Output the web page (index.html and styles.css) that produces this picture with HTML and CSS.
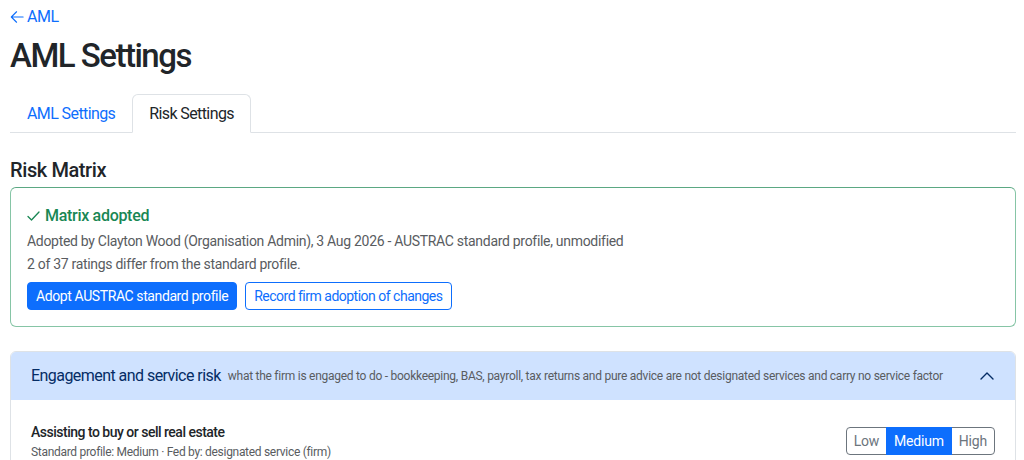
FILE: index.html
```html
<!DOCTYPE html>
<html lang="en">
<head>
    <meta charset="UTF-8">
    <meta name="viewport" content="width=device-width, initial-scale=1.0">
    <title>AML Settings</title>
    <link rel="stylesheet" href="styles.css">
</head>
<body>

<div class="page">
    <a class="back-link" href="#"><svg class="back-arrow" width="14" height="14" viewBox="0 0 16 16"><path d="M15 8H1.5M7.5 2 1.5 8l6 6" fill="none" stroke="currentColor" stroke-width="1.3" stroke-linecap="round" stroke-linejoin="round"/></svg>AML</a>
    <h1 class="page-title">AML Settings</h1>

    <ul class="tabs">
        <li><a class="tab" href="#">AML Settings</a></li>
        <li><a class="tab active" href="#">Risk Settings</a></li>
    </ul>

    <h5 class="section-title">Risk Matrix</h5>

    <!-- adoption status -->
    <div class="status-card">
        <div class="status-title"><svg class="check" width="13" height="12" viewBox="0 0 13 12"><path d="M1 6.5 4.5 10 12 2" fill="none" stroke="currentColor" stroke-width="1.3" stroke-linecap="round" stroke-linejoin="round"/></svg>Matrix adopted</div>
        <p class="status-text">Adopted by Clayton Wood (Organisation Admin), 3 Aug 2026 - AUSTRAC standard profile, unmodified</p>
        <p class="status-text">2 of 37 ratings differ from the standard profile.</p>
        <div class="status-actions">
            <button type="button" class="btn btn-primary">Adopt AUSTRAC standard profile</button>
            <button type="button" class="btn btn-outline">Record firm adoption of changes</button>
        </div>
    </div>

    <!-- risk groups -->
    <div class="accordion">
        <div class="accordion-header">
            <span class="accordion-title">Engagement and service risk</span>
            <span class="accordion-hint">what the firm is engaged to do - bookkeeping, BAS, payroll, tax returns and pure advice are not designated services and carry no service factor</span>
            <svg class="chevron" width="16" height="16" viewBox="0 0 16 16"><path d="M2 11 8 5l6 6" fill="none" stroke="#052c65" stroke-width="1.4" stroke-linecap="round" stroke-linejoin="round"/></svg>
        </div>
        <div class="accordion-body">
            <div class="risk-row">
                <div>
                    <div class="risk-name">Assisting to buy or sell real estate</div>
                    <div class="risk-meta">Standard profile: Medium &middot; Fed by: designated service (firm)</div>
                </div>
                <div class="rating-group">
                    <button type="button" class="rating">Low</button>
                    <button type="button" class="rating active">Medium</button>
                    <button type="button" class="rating">High</button>
                </div>
            </div>
        </div>
    </div>
</div>

</body>
</html>
```

FILE: styles.css
```css
body {
    font-family: Roboto, "Noto Sans", sans-serif;
    color: #212529;
    background-color: #fff;
    margin: 0;
    padding: 0;
}

.page {
    padding: 5px 8px 0 10px;
}

.back-link {
    display: inline-flex;
    align-items: center;
    gap: 3px;
    font-size: 16px;
    line-height: 24px;
    letter-spacing: -0.4px;
    color: #0d6efd;
    text-decoration: none;
}

.page-title {
    font-size: 33px;
    font-weight: 500;
    line-height: 1.2;
    letter-spacing: -1.5px;
    margin: 7px 0 18px;
}

.tabs {
    display: flex;
    list-style: none;
    margin: 0;
    padding: 0;
    border-bottom: 1px solid #dee2e6;
}

.tab {
    display: block;
    padding: 7px 16px 6px;
    margin-bottom: -1px;
    font-size: 16px;
    line-height: 24px;
    letter-spacing: -0.6px;
    color: #0d6efd;
    text-decoration: none;
    border: 1px solid transparent;
    border-radius: 6px 6px 0 0;
}

.tab.active {
    color: #212529;
    background: #fff;
    border-color: #dee2e6 #dee2e6 #fff;
}

.section-title {
    font-size: 20px;
    font-weight: 500;
    line-height: 24px;
    letter-spacing: -0.4px;
    margin: 25px 0 5px;
}

.status-card {
    border: 1px solid #86c5a6;
    border-top-color: #5ba883;
    border-radius: 6px;
    padding: 16px;
    margin-bottom: 24px;
}

.status-title {
    display: flex;
    align-items: center;
    gap: 5px;
    color: #198754;
    font-weight: 500;
    font-size: 16px;
    line-height: 24px;
    letter-spacing: -0.3px;
    margin-bottom: 3px;
}

.status-text {
    font-size: 14px;
    line-height: 21px;
    letter-spacing: -0.3px;
    color: #595c5f;
    margin: 0 0 2px;
}

.status-actions {
    display: flex;
    gap: 8px;
    margin-top: 7px;
}

.btn {
    font-family: inherit;
    font-size: 14px;
    line-height: 20px;
    letter-spacing: -0.4px;
    padding: 3px 8px;
    border-radius: 4px;
    border: 1px solid #0d6efd;
    cursor: pointer;
}

.btn-primary {
    background-color: #0d6efd;
    color: #fff;
}

.btn-outline {
    background-color: #fff;
    color: #0d6efd;
    letter-spacing: -0.5px;
}

.accordion {
    border: 1px solid #dee2e6;
    border-radius: 6px;
    overflow: hidden;
}

.accordion-header {
    display: flex;
    align-items: center;
    padding: 12px 20px;
    background-color: #cfe2ff;
    color: #052c65;
}

.accordion-title {
    font-size: 16px;
    line-height: 24px;
    letter-spacing: -0.55px;
    white-space: nowrap;
}

.accordion-hint {
    font-size: 12px;
    letter-spacing: -0.26px;
    color: #595c5f;
    margin-left: 7px;
    white-space: nowrap;
}

.chevron {
    margin-left: auto;
    flex-shrink: 0;
}

.accordion-body {
    padding: 10px 0;
}

.risk-row {
    display: flex;
    justify-content: space-between;
    align-items: center;
    padding: 12px 20px;
}

.risk-name {
    font-size: 14px;
    font-weight: 500;
    line-height: 21px;
    letter-spacing: -0.5px;
}

.risk-meta {
    font-size: 12px;
    line-height: 18px;
    letter-spacing: -0.3px;
    color: #595c5f;
}

.rating-group {
    display: flex;
}

.rating {
    font-family: inherit;
    font-size: 14px;
    line-height: 20px;
    letter-spacing: -0.2px;
    padding: 3px 7px;
    background: #fff;
    color: #6c757d;
    border: 1px solid #6c757d;
    margin-left: -1px;
    cursor: pointer;
}

.rating:first-child {
    border-radius: 4px 0 0 4px;
    margin-left: 0;
}

.rating:last-child {
    border-radius: 0 4px 4px 0;
}

.rating.active {
    background-color: #0d6efd;
    border-color: #0d6efd;
    color: #fff;
    position: relative;
}
```
